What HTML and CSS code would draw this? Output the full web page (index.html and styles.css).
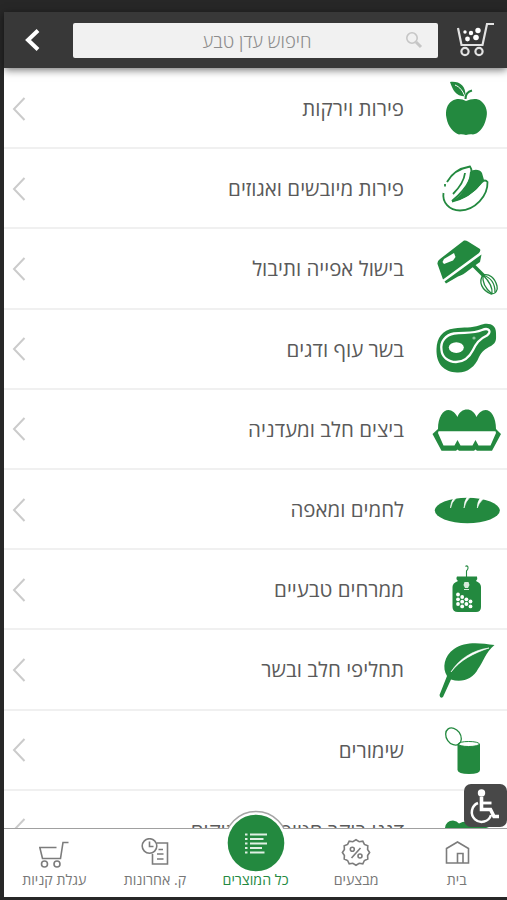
FILE: index.html
```
<!DOCTYPE html>
<html lang="he" dir="rtl">
<head>
  <meta charset="UTF-8" />
  <title>עדן טבע</title>
  <link rel="stylesheet" href="styles.css">
</head>
<body>
  <div class="app">
    <!-- Header -->
    <div class="header">
      <svg class="header-cart" viewBox="0 0 40 36" fill="none" stroke="#e2e2e2" stroke-width="2.2">
        <path d="M2 6 L5.5 23 H26.5 L31 2 H38" />
        <circle cx="9" cy="29.5" r="3.6" />
        <circle cx="23" cy="29.5" r="3.6" />
        <g fill="#fff" stroke="none">
          <circle cx="9" cy="10" r="1.7" />
          <circle cx="15" cy="11" r="2.2" />
          <circle cx="22" cy="8.5" r="2.7" />
          <circle cx="11.5" cy="17" r="2.4" />
          <circle cx="20" cy="15.5" r="2.8" />
        </g>
      </svg>
      <div class="search">
        <span class="search-text">חיפוש עדן טבע</span>
        <svg class="search-icon" viewBox="0 0 18 18" fill="none" stroke="#c6c6c6">
          <circle cx="7" cy="7" r="5.2" stroke-width="1.6" />
          <path d="M11 11 L16 16" stroke-width="3" />
        </svg>
      </div>
      <svg class="back" viewBox="0 0 16 22" fill="none" stroke="#fff" stroke-width="4">
        <path d="M14 1.5 L4 11 L14 20.5" />
      </svg>
    </div>

    <!-- Categories -->
    <div class="list">
      <div class="row">
        <svg class="icon" viewBox="0 0 80 80">
          <path d="M39 33 C44 31 50 30 54 33 C60 38 61 45 59 51 C57 60 51 66 46 66.500 C43 66 41 66.500 39 67 C37 66.500 35 66 32 66.500 C27 65 21 59 19.500 50 C18 43 20 36 25 33 C30 30 35 31 39 33Z" />
          <path d="M23 14 C32 13 39 17 38.500 28.500 C28 28 26 22 23 14Z" />
          <path d="M28 17 C33 19 36 23 38 29" fill="none" stroke="#fff" stroke-width="1" />
          <path d="M38.500 31 C38.500 27 41 23.500 45 22.500" fill="none" stroke="#23893f" stroke-width="2" />
        </svg>
        <span class="name">פירות וירקות</span>
        <svg class="chevron" viewBox="0 0 14 24"><path d="M12.500 1 L2 12 L12.500 23" /></svg>
      </div>
      <div class="row">
        <svg class="icon" viewBox="0 0 80 80">
          <path d="M43 24 C46 21 53 21 55 25 L57 32 C48 45 37 52 25 53.500 C33 48 42 39 43 24Z" />
          <g fill="none" stroke="#23893f" stroke-width="1.800">
            <path d="M20 34 C25 25 34 20 43 18.500 C47 24 44 37 25 53" />
            <path d="M38 25 C37 34 32 40 26 46" />
            <path d="M18 36 L18 38.500" />
            <path d="M16.500 45 C15 54 22 62.500 33 62.500 C48 62 61 48 60.500 34 C59 32 57 32 55 34 C47 44 37 51 25 53.500" />
          </g>
        </svg>
        <span class="name">פירות מיובשים ואגוזים</span>
        <svg class="chevron" viewBox="0 0 14 24"><path d="M12.500 1 L2 12 L12.500 23" /></svg>
      </div>
      <div class="row">
        <svg class="icon" viewBox="0 0 80 80">
          <path d="M37 12.500 Q39 12 41 13.500 L53 21 Q54 23 52 25 L16 51.500 L10.500 36 Q10 33 13 31Z" />
          <path d="M54.500 26.500 L53 34 L48 37.500 L42 42 Q36 47 31 48.500 L19 55.500 L17.500 53.500Z" />
          <path d="M17 31 L27 25 L28.500 29 L26 32.500 L17 36 L15.500 34Z" fill="#fff" />
          <path d="M46 37 L57 48" fill="none" stroke="#23893f" stroke-width="3.500" />
          <g fill="none" stroke="#23893f" stroke-width="1.300">
            <path d="M56 47 C51 54 55 62 64 66 C69 66 71 62 70 58 C68 50 62 45 56 47Z" />
            <path d="M56 47 C55 55 60 62 65 66 M56 47 C62 53 66 59 65 66 M56 47 C65 50 68 56 68 64" />
          </g>
        </svg>
        <span class="name">בישול אפייה ותיבול</span>
        <svg class="chevron" viewBox="0 0 14 24"><path d="M12.500 1 L2 12 L12.500 23" /></svg>
      </div>
      <div class="row">
        <svg class="icon" viewBox="0 0 80 80">
          <path d="M9.500 40 C10 29 15 21 27 19.500 C37 18 45 19 52 16.500 C61 13 69 15 69 24 C69 30 70 33 64 37 C58 40 55 42 52 48 C48 58 40 64 30 63.500 C17 63 9 55 9.500 40Z" />
          <path d="M14.500 41 C13 32 19 26 27 24.500 C37 23 46 25 55 21 C62 18 65 23 60 26.500 C52 30 49 35 46 41 C42 49 36 53 29 53 C21 53 15 48 14.500 41Z" fill="none" stroke="#fff" stroke-width="2.300" />
          <ellipse cx="29.300" cy="38.600" rx="7.500" ry="5.300" fill="#fff" />
          <circle cx="47" cy="29" r="1.600" fill="#8fc49e" />
        </svg>
        <span class="name">בשר עוף ודגים</span>
        <svg class="chevron" viewBox="0 0 14 24"><path d="M12.500 1 L2 12 L12.500 23" /></svg>
      </div>
      <div class="row">
        <svg class="icon" viewBox="0 0 80 80">
          <path d="M11 40 C11 28 16 21 21.500 21 C25 21 28.500 24 30.500 28 C32 23 36 20.500 40 20.500 C44 20.500 47.500 23 49.500 28 C51.500 24 55 21 58.500 21 C64 21 69 28 69 40 L74 45 L65 61.700 H50 L48.500 60.500 L47 61.700 H32 L30.500 60.500 L29 61.700 H14.500 L5.500 45Z" />
          <path d="M11.500 42.300 H68.500 L69 44 L63.500 56.500 H51.500 L48.500 51 L45.500 56.500 H33.500 L30.500 51 L27.500 56.500 H16.500 L11 44Z" fill="#fff" />
        </svg>
        <span class="name">ביצים חלב ומעדניה</span>
        <svg class="chevron" viewBox="0 0 14 24"><path d="M12.500 1 L2 12 L12.500 23" /></svg>
      </div>
      <div class="row">
        <svg class="icon" viewBox="0 0 80 80">
          <ellipse cx="40.300" cy="41.500" rx="32.500" ry="12.700" />
          <path d="M23.500 39 Q24 34 30 28 L27.500 28 Q23.500 33 23.500 39Z M37 39 Q38 33 44 27 L41 27 Q37 32 37 39Z M50.300 39 Q51 35 57 29 L54 28 Q50 33 50.300 39Z" fill="#fff" stroke="#fff" stroke-width=".6" />
        </svg>
        <span class="name">לחמים ומאפה</span>
        <svg class="chevron" viewBox="0 0 14 24"><path d="M12.500 1 L2 12 L12.500 23" /></svg>
      </div>
      <div class="row">
        <svg class="icon" viewBox="0 0 80 80">
          <path d="M30 27.500 H50 Q51 30 49 32 Q54 34 54 38 V58 Q54 63 49 63 H31 Q25.500 63 25.500 58 V38 Q25.500 34 31 32 Q28.500 30 30 27.500Z" />
          <path d="M39.500 28 V22 Q41.500 20 41 18 Q40 16 38.500 17.500" fill="none" stroke="#23893f" stroke-width="1.100" />
          <path d="M37.500 33 H41.500 L42.500 36 L41 39 H38 L36.500 36Z M37 40 H42 V41 H37Z" fill="#d7eadc" />
          <g fill="#fff">
            <circle cx="31" cy="45.500" r="1.900" /><circle cx="31" cy="50.300" r="1.900" /><circle cx="31" cy="55" r="1.900" />
            <circle cx="35.200" cy="48" r="1.900" /><circle cx="35.200" cy="52.700" r="1.900" /><circle cx="35.200" cy="57.400" r="1.900" />
            <circle cx="39.400" cy="50.300" r="1.900" /><circle cx="39.400" cy="55" r="1.900" />
            <circle cx="43.500" cy="52.500" r="1.900" /><circle cx="43.500" cy="57.400" r="1.900" />
          </g>
        </svg>
        <span class="name">ממרחים טבעיים</span>
        <svg class="chevron" viewBox="0 0 14 24"><path d="M12.500 1 L2 12 L12.500 23" /></svg>
      </div>
      <div class="row">
        <svg class="icon" viewBox="0 0 80 80">
          <path d="M67.500 16 C58 24 57 32 51 40 C46 50 35 54 24 50.500 L16 68 Q13 70 12.500 66 L20 47 C15 39 17 27 27 20 C38 12 53 14 67.500 16Z" />
          <path d="M62 19 C46 21 32 30 24 43 C33 31 47 24 62 19Z" fill="#fff" stroke="#fff" stroke-width=".6" />
        </svg>
        <span class="name">תחליפי חלב ובשר</span>
        <svg class="chevron" viewBox="0 0 14 24"><path d="M12.500 1 L2 12 L12.500 23" /></svg>
      </div>
      <div class="row">
        <svg class="icon" viewBox="0 0 80 80">
          <path d="M30.500 34 V60 Q31 64 42 64 Q53 64 53 60 V34Z" />
          <ellipse cx="41.700" cy="34" rx="10.700" ry="2.500" fill="#fff" stroke="#23893f" stroke-width="1" />
          <ellipse cx="26.500" cy="26.500" rx="7" ry="9.300" transform="rotate(-35 26.500 26.500)" fill="none" stroke="#23893f" stroke-width="1.300" />
        </svg>
        <span class="name">שימורים</span>
        <svg class="chevron" viewBox="0 0 14 24"><path d="M12.500 1 L2 12 L12.500 23" /></svg>
      </div>
      <div class="row">
        <svg class="icon" viewBox="0 0 80 80">
          <path d="M18 38 Q19 30.500 26 30.500 Q30 31 32 33.500 Q38 30 48 33 L62 38 V50 H18Z" />
        </svg>
        <span class="name">דגני בוקר חטיפים ומתוקים</span>
        <svg class="chevron" viewBox="0 0 14 24"><path d="M12.500 1 L2 12 L12.500 23" /></svg>
      </div>
    </div>

    <!-- Accessibility button -->
    <div class="access">
      <svg viewBox="0 0 43 43" fill="none" stroke="#fff">
        <circle cx="17.500" cy="9" r="3.700" fill="#fff" stroke="none" />
        <path d="M17.500 13 V25.500 H26.500 L30 32.500 H35" stroke-width="3.600" />
        <path d="M18 19 H27.500" stroke-width="2.800" />
        <path d="M14 19 A 9.800 9.800 0 1 0 27 31" stroke-width="2.500" />
      </svg>
    </div>

    <!-- Bottom navigation -->
    <div class="nav">
      <div class="tab">
        <svg class="tab-icon" viewBox="0 0 30 30">
          <path d="M4.500 10.500 L15.500 4 L26.500 10.500 V25 H4.500Z M15.500 25 V15.500 H21 V25" />
        </svg>
        <span>בית</span>
      </div>
      <div class="tab">
        <svg class="tab-icon" viewBox="0 0 30 30">
          <path d="M15 1.800 l3.200 1.900 3.600-.5 1.600 3.200 3.400 1.400-.2 3.700 2 3-2 3 .2 3.600-3.400 1.400-1.600 3.300-3.600-.5-3.200 1.900-3.200-1.900-3.600.5-1.600-3.300-3.400-1.400.2-3.600-2-3 2-3-.2-3.700 3.400-1.400 1.600-3.200 3.600.5Z" />
          <circle cx="11.300" cy="11.300" r="2" />
          <circle cx="19" cy="18" r="2" />
          <path d="M19.500 10 L10.500 20" />
        </svg>
        <span>מבצעים</span>
      </div>
      <div class="tab active">
        <svg class="bubble" viewBox="0 0 70 70">
          <circle cx="35" cy="35" r="31.500" fill="#fff" stroke="#a5a5a5" stroke-width="1.500" />
          <rect y="21" width="70" height="49" fill="#fff" />
          <circle cx="35" cy="35" r="28.300" fill="#23893f" />
          <path d="M29 26.500 H46 M29 31 H42.500 M29 35.500 H46 M29 40 H41 M29 44.500 H43.500" stroke="#dff0e4" stroke-width="2" />
          <path d="M24 26.500 H26.500 M24 31 H26.500 M24 35.500 H26.500 M24 40 H26.500 M24 44.500 H26.500" stroke="#dff0e4" stroke-width="2" />
        </svg>
        <span>כל המוצרים</span>
      </div>
      <div class="tab">
        <svg class="tab-icon" viewBox="0 0 30 30">
          <circle cx="9.500" cy="8" r="7.300" />
          <path d="M9.500 3.500 V8.500 H13.500" />
          <path d="M17 5 H27.500 V26 H12.500 V16" />
          <path d="M18.500 11.500 H23 M17 16 H23.500 M17 21 H23.500" />
        </svg>
        <span>ק. אחרונות</span>
      </div>
      <div class="tab">
        <svg class="tab-icon" viewBox="0 0 30 30">
          <path d="M17.500 9.500 H.800 L3.500 20.500 H21.500 L24 4.500 H29.500" />
          <circle cx="5.500" cy="26" r="3" />
          <circle cx="18" cy="26" r="3" />
        </svg>
        <span>עגלת קניות</span>
      </div>
    </div>
  </div>
</body>
</html>
```
FILE: styles.css
```
* {
  margin: 0;
  padding: 0;
  box-sizing: border-box;
}

html, body {
  width: 100%;
  height: 100%;
  overflow: hidden;
}

body {
  background: #272727;
  padding: 12px 0 3px 4px;
  font-family: "Open Sans", "Noto Sans", sans-serif;
}

.app {
  position: relative;
  display: flex;
  flex-direction: column;
  height: 100%;
  background: #fff;
}

.header {
  position: relative;
  z-index: 2;
  display: flex;
  align-items: center;
  flex: 0 0 56px;
  padding: 0 11px 0 20px;
  background: #383838;
  box-shadow: 0 2px 8px rgba(0, 0, 0, 0.55);
}

.header-cart {
  width: 40px;
  height: 36px;
}

.search {
  display: flex;
  align-items: center;
  width: 365px;
  height: 35px;
  margin: 0 18px 0 33px;
  padding-right: 15px;
  background: #f1f1f1;
  border-radius: 2px;
}

.search-icon {
  order: -1;
  width: 18px;
  height: 18px;
}

.search-text {
  flex: 1;
  padding-left: 36px;
  padding-top: 1px;
  text-align: center;
  font-size: 18.5px;
  font-weight: 300;
  color: #8c8c8c;
}

.back {
  width: 16px;
  height: 22px;
}

.list {
  flex: 1;
  min-height: 0;
  padding-top: 1px;
  overflow: hidden;
}

.row {
  display: flex;
  align-items: center;
  height: 80.2px;
  padding-left: 8px;
  border-bottom: 2px solid #f0f0f0;
}

.icon {
  flex: none;
  width: 80px;
  height: 80px;
  fill: #23893f;
}

.name {
  flex: 1;
  padding-right: 23px;
  font-size: 20.5px;
  color: #5a5a5a;
  white-space: nowrap;
}

.chevron {
  width: 14px;
  height: 24px;
  margin-top: 1px;
  fill: none;
  stroke: #cbcbcb;
  stroke-width: 2;
}

.access {
  position: absolute;
  right: 0;
  bottom: 70px;
  width: 43px;
  height: 43px;
  background: #484848;
  border-radius: 7px;
}

.access svg {
  display: block;
}

.nav {
  position: relative;
  display: flex;
  flex: 0 0 69px;
  border-top: 1.5px solid #a0a0a0;
  background: #fff;
}

.tab {
  display: flex;
  flex: 1;
  flex-direction: column;
  align-items: center;
  padding-top: 9px;
  font-size: 14.2px;
  line-height: 20px;
  color: #777;
  white-space: nowrap;
}

.tab-icon {
  width: 30px;
  height: 30px;
  margin-bottom: 2px;
  fill: none;
  stroke: #7c7c7c;
  stroke-width: 1.6;
}

.active {
  padding-top: 0;
  color: #23893f;
}

.bubble {
  width: 70px;
  height: 70px;
  margin: -21px 0 -8px;
}
```
